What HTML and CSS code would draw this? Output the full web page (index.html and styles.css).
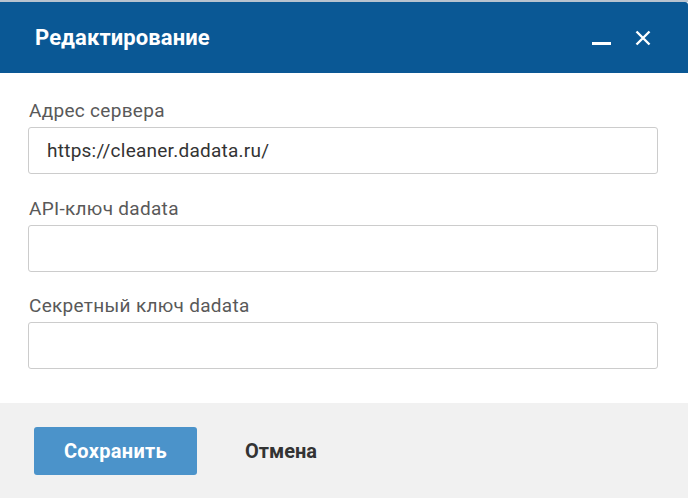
FILE: index.html
```html
<!DOCTYPE html>
<html lang="ru">
<head>
<meta charset="utf-8">
<link rel="stylesheet" href="styles.css">
</head>
<body>
<div class="dialog">
  <div class="header">
    <div class="title">Редактирование</div>
    <div class="controls">
      <span class="minimize"></span>
      <svg class="close" width="16" height="16" viewBox="0 0 16 16"><path d="M1.5 1.5 L14.5 14.5 M14.5 1.5 L1.5 14.5" stroke="#fff" stroke-width="2.4" fill="none"/></svg>
    </div>
  </div>
  <div class="body">
    <div class="field">
      <label class="label">Адрес сервера</label>
      <div class="input">https://cleaner.dadata.ru/</div>
    </div>
    <div class="field">
      <label class="label">API-ключ dadata</label>
      <div class="input"></div>
    </div>
    <div class="field">
      <label class="label">Секретный ключ dadata</label>
      <div class="input"></div>
    </div>
  </div>
  <div class="footer">
    <button class="btn-primary">Сохранить</button>
    <button class="btn-link">Отмена</button>
  </div>
</div>
</body>
</html>
```
FILE: styles.css
```css
html, body {
  margin: 0;
  padding: 0;
  background: #ffffff;
}
body {
  font-family: Roboto, "Liberation Sans", sans-serif;
}
.dialog {
  width: 688px;
  height: 498px;
  display: flex;
  flex-direction: column;
  border-top: 2px solid #b8c3cf;
  box-sizing: border-box;
  overflow: hidden;
}
.header {
  height: 71px;
  flex: none;
  background: #0a5895;
  display: flex;
  align-items: center;
  justify-content: space-between;
  padding: 0 37px 0 35px;
  border-top-right-radius: 3px;
}
.title {
  color: #fff;
  font-size: 22px;
  letter-spacing: 0.1px;
  font-weight: 700;
  margin-top: -1px;
}
.controls {
  display: flex;
  align-items: flex-end;
  gap: 24px;
}
.minimize {
  width: 19px;
  height: 3px;
  background: #fff;
  margin-bottom: 1px;
}
.close {
  display: block;
}
.body {
  flex: 1;
  padding: 28px 30px 0 28px;
  display: flex;
  flex-direction: column;
  gap: 24.5px;
}
.field {
  display: flex;
  flex-direction: column;
}
.label {
  font-size: 19px;
  letter-spacing: 0.3px;
  line-height: 20px;
  color: #595959;
  margin-left: 1px;
  margin-bottom: 6px;
}
.input {
  height: 47px;
  box-sizing: border-box;
  border: 1px solid #cccccc;
  border-radius: 3px;
  padding: 0 18px;
  font-size: 19px;
  letter-spacing: 0.25px;
  color: #333;
  display: flex;
  align-items: center;
}
.footer {
  height: 95px;
  flex: none;
  background: #f1f1f1;
  display: flex;
  align-items: flex-start;
  padding: 24px 34px 0;
  box-sizing: border-box;
  gap: 48px;
}
.btn-primary {
  width: 163px;
  height: 48px;
  border: none;
  border-radius: 3px;
  background: #4b93ca;
  color: #fff;
  font-family: Roboto, "Liberation Sans", sans-serif;
  font-size: 20px;
  letter-spacing: 0.3px;
  font-weight: 700;
  padding: 0;
}
.btn-link {
  height: 48px;
  border: none;
  background: transparent;
  color: #333;
  font-family: Roboto, "Liberation Sans", sans-serif;
  font-size: 20px;
  font-weight: 700;
  padding: 0;
}
```
